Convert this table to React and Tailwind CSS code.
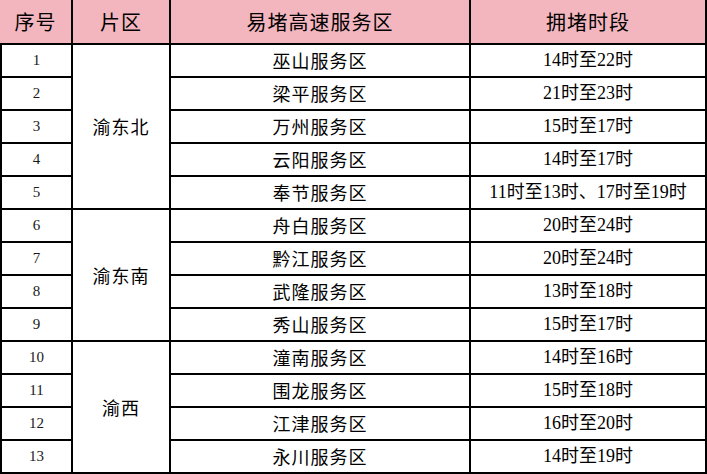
import React from "react";

const rows = [
  { no: 1, area: "巫山服务区", time: "14时至22时" },
  { no: 2, area: "梁平服务区", time: "21时至23时" },
  { no: 3, area: "万州服务区", time: "15时至17时" },
  { no: 4, area: "云阳服务区", time: "14时至17时" },
  { no: 5, area: "奉节服务区", time: "11时至13时、17时至19时" },
  { no: 6, area: "舟白服务区", time: "20时至24时" },
  { no: 7, area: "黔江服务区", time: "20时至24时" },
  { no: 8, area: "武隆服务区", time: "13时至18时" },
  { no: 9, area: "秀山服务区", time: "15时至17时" },
  { no: 10, area: "潼南服务区", time: "14时至16时" },
  { no: 11, area: "围龙服务区", time: "15时至18时" },
  { no: 12, area: "江津服务区", time: "16时至20时" },
  { no: 13, area: "永川服务区", time: "14时至19时" },
];

// region name by first row, with how many rows it spans
const regions = {
  1: { name: "渝东北", span: 5 },
  6: { name: "渝东南", span: 4 },
  10: { name: "渝西", span: 4 },
};

const cjk = "font-['Noto_Sans_CJK_SC',sans-serif]";
const serif = "font-['Liberation_Serif','Noto_Sans_CJK_SC',serif]";
const cell = "border-r-2 border-b-2 border-black text-center align-middle p-0";

export default function App() {
  return (
    <div className="w-[707px] h-[474px] bg-white overflow-hidden">
      <table className="w-[707px] table-fixed border-separate border-spacing-0">
        <colgroup>
          <col className="w-[73px]" />
          <col className="w-[98px]" />
          <col className="w-[300px]" />
          <col className="w-[236px]" />
        </colgroup>
        <thead>
          <tr className="h-[45px] bg-[#f3b6be]">
            {["序号", "片区", "易堵高速服务区", "拥堵时段"].map((t) => (
              <th
                key={t}
                className={`${cell} ${cjk} text-[20px] font-normal tracking-[1px] text-black`}
              >
                {t}
              </th>
            ))}
          </tr>
        </thead>
        <tbody>
          {rows.map((r) => (
            <tr key={r.no} className="h-[33px]">
              <td className={`${cell} border-l-2 ${serif} text-[15px] text-[#1a1a1a]`}>
                {r.no}
              </td>
              {regions[r.no] && (
                <td
                  rowSpan={regions[r.no].span}
                  className={`${cell} ${cjk} text-[18px] tracking-[1px] text-black`}
                >
                  {regions[r.no].name}
                </td>
              )}
              <td className={`${cell} ${cjk} text-[18px] tracking-[1px] text-black`}>
                {r.area}
              </td>
              <td className={`${cell} ${serif} text-[18px] text-black`}>{r.time}</td>
            </tr>
          ))}
        </tbody>
      </table>
    </div>
  );
}
